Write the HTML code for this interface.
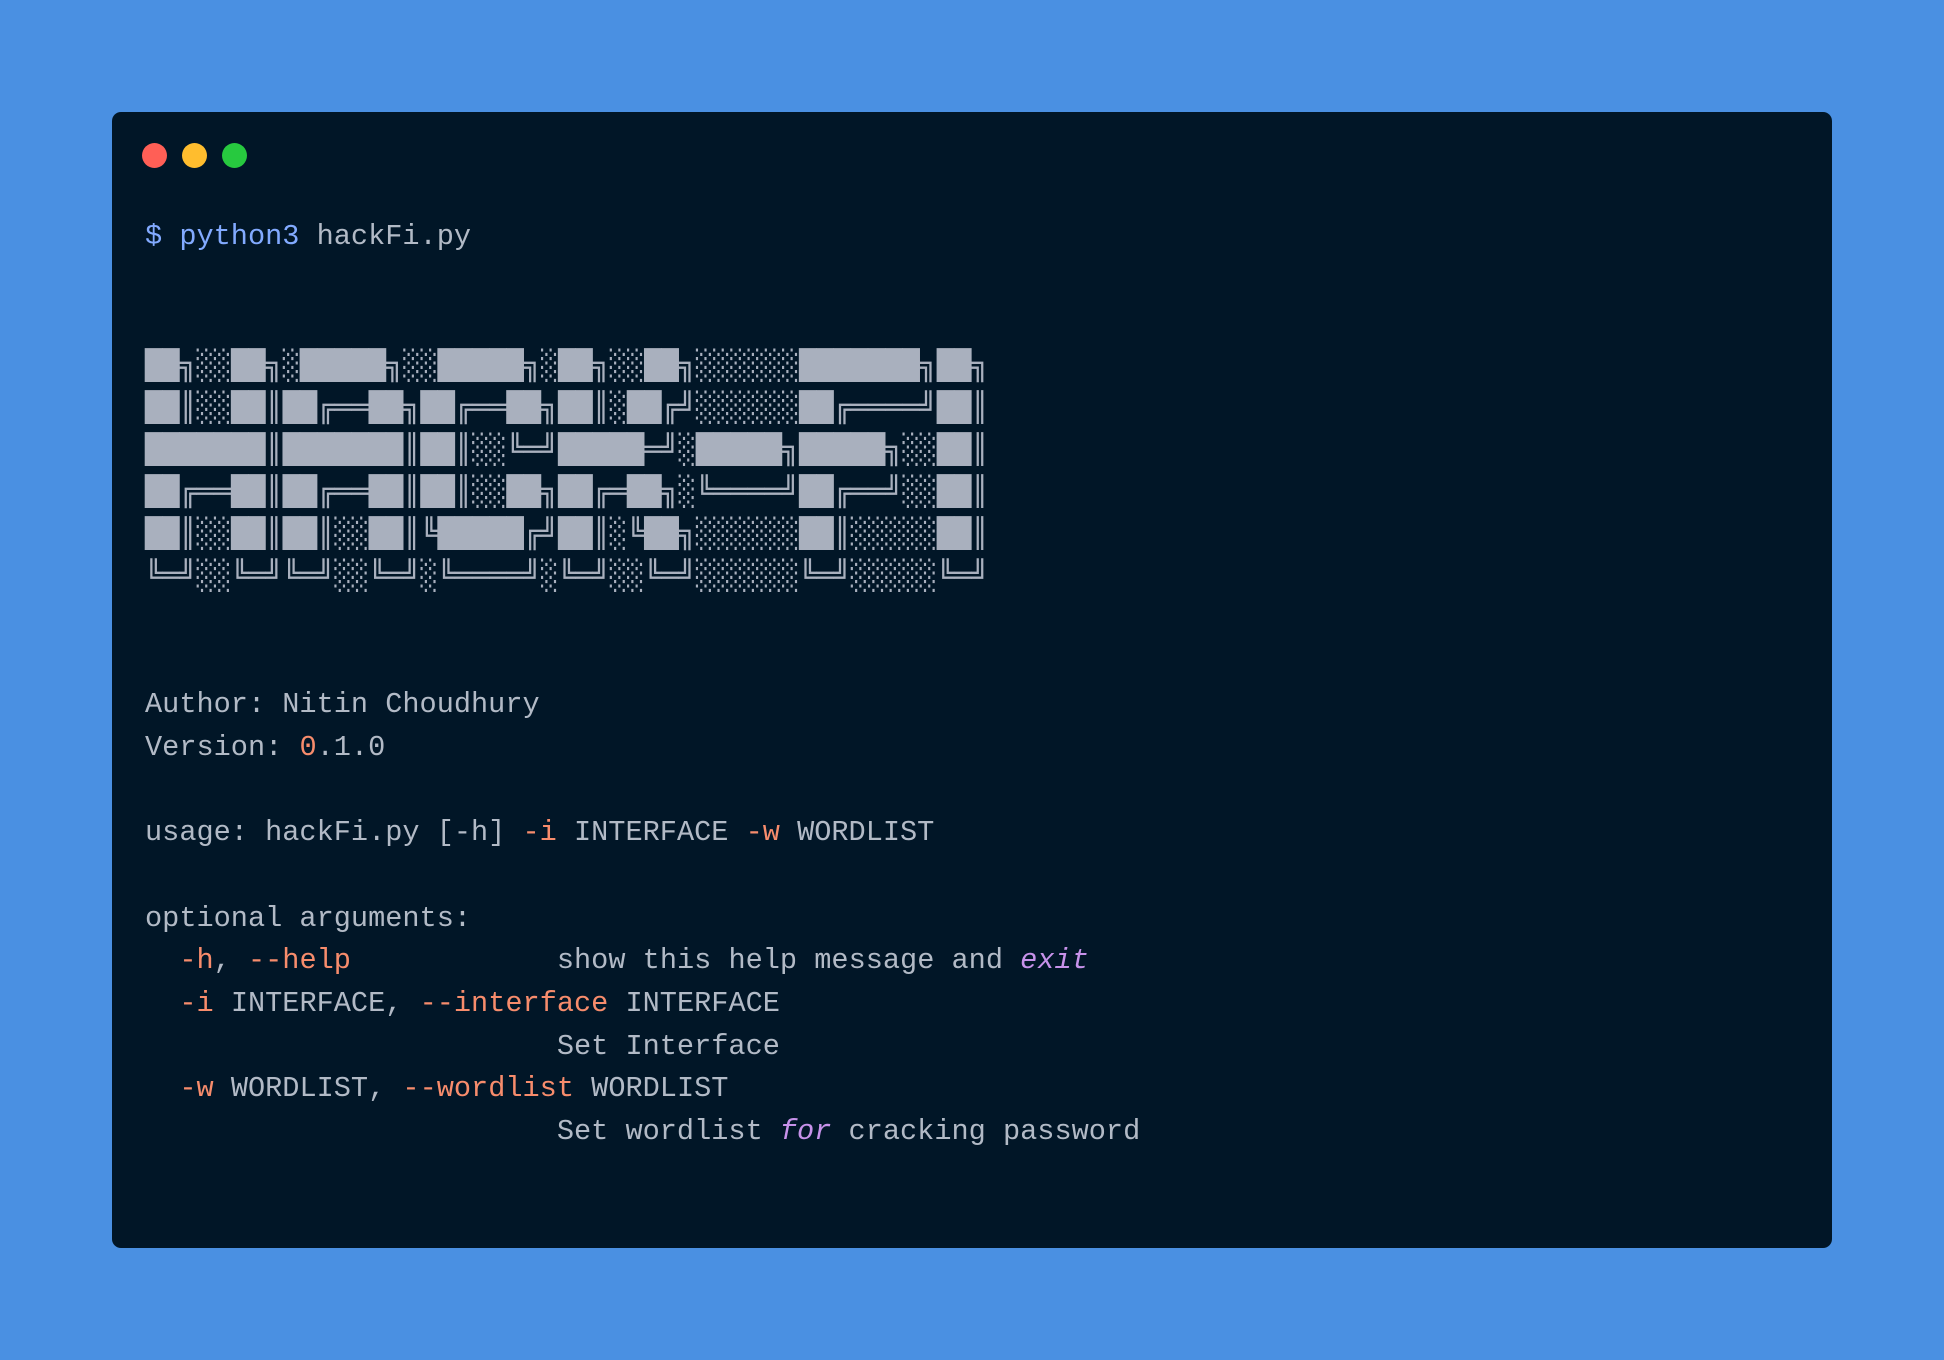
<!DOCTYPE html>
<html><head><meta charset="utf-8"><style>
html,body{margin:0;padding:0;}
body{width:1944px;height:1360px;background:#4a90e2;position:relative;overflow:hidden;}
.win{position:absolute;left:112px;top:112px;width:1720px;height:1136px;background:#011627;border-radius:9px;}
.dot{position:absolute;top:143px;width:25px;height:25px;border-radius:50%;}
pre{position:absolute;left:145px;margin:0;font-family:"Liberation Mono","DejaVu Sans Mono",monospace;font-size:28.6px;line-height:42.3px;color:#b2bac6;}
pre.art{font-family:"DejaVu Sans Mono",monospace;color:#a9b0be;line-height:42.1px;top:344px;}
pre.txt{top:684px;line-height:42.7px;}
.b{color:#82aaff}.o{color:#f78c6c}.p{color:#c792ea;font-style:italic}
</style></head><body>
<div class="win"></div>
<div class="dot" style="left:142px;background:#ff5f56"></div>
<div class="dot" style="left:182px;background:#ffbd2e"></div>
<div class="dot" style="left:222px;background:#27c93f"></div>
<pre style="top:216px"><span class="b">$ python3</span> hackFi.py</pre>
<pre class="art">██╗░░██╗░█████╗░░█████╗░██╗░░██╗░░░░░░███████╗██╗
██║░░██║██╔══██╗██╔══██╗██║░██╔╝░░░░░░██╔════╝██║
███████║███████║██║░░╚═╝█████═╝░█████╗█████╗░░██║
██╔══██║██╔══██║██║░░██╗██╔═██╗░╚════╝██╔══╝░░██║
██║░░██║██║░░██║╚█████╔╝██║░╚██╗░░░░░░██║░░░░░██║
╚═╝░░╚═╝╚═╝░░╚═╝░╚════╝░╚═╝░░╚═╝░░░░░░╚═╝░░░░░╚═╝</pre>
<pre class="txt">Author: Nitin Choudhury
Version: <span class="o">0</span>.1.0

usage: hackFi.py [-h] <span class="o">-i</span> INTERFACE <span class="o">-w</span> WORDLIST

optional arguments:
  <span class="o">-h</span>, <span class="o">--help</span>            show this help message and <span class="p">exit</span>
  <span class="o">-i</span> INTERFACE, <span class="o">--interface</span> INTERFACE
                        Set Interface
  <span class="o">-w</span> WORDLIST, <span class="o">--wordlist</span> WORDLIST
                        Set wordlist <span class="p">for</span> cracking password</pre>
</body></html>
